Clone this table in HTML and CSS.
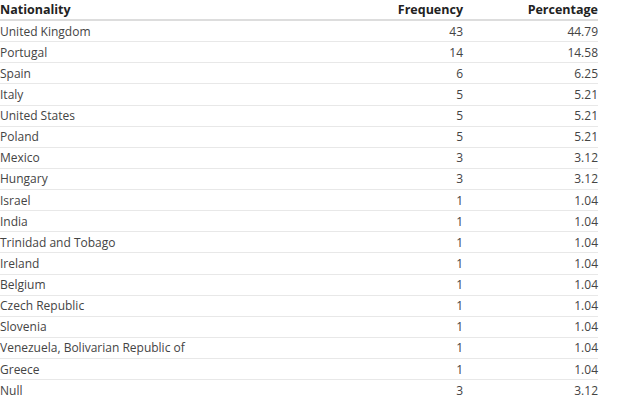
FILE: index.html
```html
<!DOCTYPE html>
<html>
<head>
<meta charset="utf-8">
<link rel="stylesheet" href="styles.css">
</head>
<body>
<table class="freq">
  <colgroup><col class="c-name"><col class="c-freq"><col class="c-pct"></colgroup>
  <thead>
    <tr><th class="left">Nationality</th><th>Frequency</th><th>Percentage</th></tr>
  </thead>
  <tbody>
    <tr><td class="left">United Kingdom</td><td>43</td><td>44.79</td></tr>
    <tr><td class="left">Portugal</td><td>14</td><td>14.58</td></tr>
    <tr><td class="left">Spain</td><td>6</td><td>6.25</td></tr>
    <tr><td class="left">Italy</td><td>5</td><td>5.21</td></tr>
    <tr><td class="left">United States</td><td>5</td><td>5.21</td></tr>
    <tr><td class="left">Poland</td><td>5</td><td>5.21</td></tr>
    <tr><td class="left">Mexico</td><td>3</td><td>3.12</td></tr>
    <tr><td class="left">Hungary</td><td>3</td><td>3.12</td></tr>
    <tr><td class="left">Israel</td><td>1</td><td>1.04</td></tr>
    <tr><td class="left">India</td><td>1</td><td>1.04</td></tr>
    <tr><td class="left">Trinidad and Tobago</td><td>1</td><td>1.04</td></tr>
    <tr><td class="left">Ireland</td><td>1</td><td>1.04</td></tr>
    <tr><td class="left">Belgium</td><td>1</td><td>1.04</td></tr>
    <tr><td class="left">Czech Republic</td><td>1</td><td>1.04</td></tr>
    <tr><td class="left">Slovenia</td><td>1</td><td>1.04</td></tr>
    <tr><td class="left">Venezuela, Bolivarian Republic of</td><td>1</td><td>1.04</td></tr>
    <tr><td class="left">Greece</td><td>1</td><td>1.04</td></tr>
    <tr><td class="left">Null</td><td>3</td><td>3.12</td></tr>
  </tbody>
</table>
</body>
</html>
```
FILE: styles.css
```css
html, body { margin: 0; padding: 0; background: #fff; }
body { font-family: "Open Sans", sans-serif; font-size: 12px; color: #444; }
.freq { border-collapse: collapse; width: 598px; table-layout: fixed; }
.c-name { width: 333px; }
.c-freq { width: 130px; }
.c-pct { width: 135px; }
.freq th, .freq td { padding: 0; text-align: right; white-space: nowrap; }
.freq th.left, .freq td.left { text-align: left; }
.freq th { font-size: 12.5px; font-weight: bold; color: #222; height: 19px; line-height: 19px; border-bottom: 2px solid #ddd; }
.freq td { height: 20.125px; line-height: 19px; border-bottom: 1px solid #e8e8e8; }
```
